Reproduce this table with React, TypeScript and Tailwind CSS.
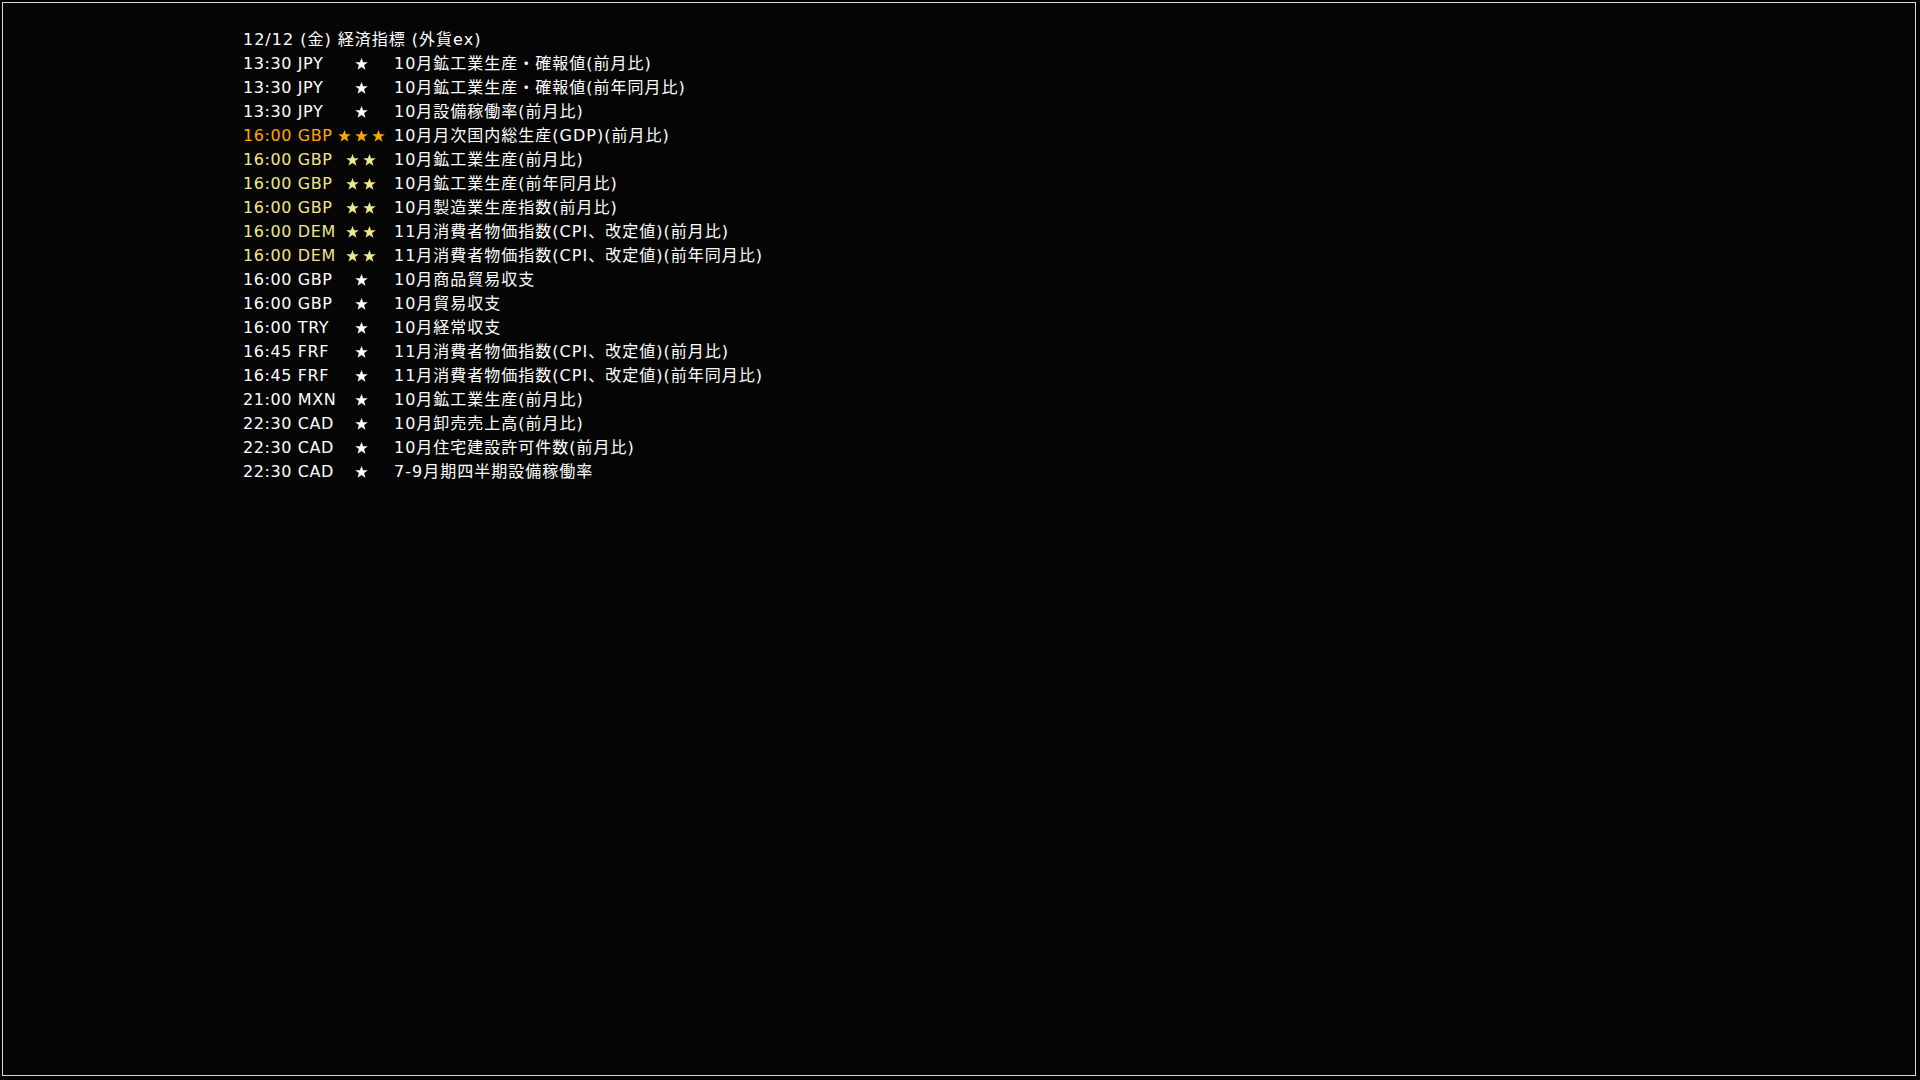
import React from "react";

type Row = { t: string; c: string; s: number; d: string };

const rows: Row[] = [
  { t: "13:30", c: "JPY", s: 1, d: "10月鉱工業生産・確報値(前月比)" },
  { t: "13:30", c: "JPY", s: 1, d: "10月鉱工業生産・確報値(前年同月比)" },
  { t: "13:30", c: "JPY", s: 1, d: "10月設備稼働率(前月比)" },
  { t: "16:00", c: "GBP", s: 3, d: "10月月次国内総生産(GDP)(前月比)" },
  { t: "16:00", c: "GBP", s: 2, d: "10月鉱工業生産(前月比)" },
  { t: "16:00", c: "GBP", s: 2, d: "10月鉱工業生産(前年同月比)" },
  { t: "16:00", c: "GBP", s: 2, d: "10月製造業生産指数(前月比)" },
  { t: "16:00", c: "DEM", s: 2, d: "11月消費者物価指数(CPI、改定値)(前月比)" },
  { t: "16:00", c: "DEM", s: 2, d: "11月消費者物価指数(CPI、改定値)(前年同月比)" },
  { t: "16:00", c: "GBP", s: 1, d: "10月商品貿易収支" },
  { t: "16:00", c: "GBP", s: 1, d: "10月貿易収支" },
  { t: "16:00", c: "TRY", s: 1, d: "10月経常収支" },
  { t: "16:45", c: "FRF", s: 1, d: "11月消費者物価指数(CPI、改定値)(前月比)" },
  { t: "16:45", c: "FRF", s: 1, d: "11月消費者物価指数(CPI、改定値)(前年同月比)" },
  { t: "21:00", c: "MXN", s: 1, d: "10月鉱工業生産(前月比)" },
  { t: "22:30", c: "CAD", s: 1, d: "10月卸売売上高(前月比)" },
  { t: "22:30", c: "CAD", s: 1, d: "10月住宅建設許可件数(前月比)" },
  { t: "22:30", c: "CAD", s: 1, d: "7-9月期四半期設備稼働率" },
];

function Star({ color }: { color: string }) {
  return (
    <svg width="13" height="12" viewBox="0 0 13 12" className="block">
      <polygon
        points="6.5,0 8.1,4.2 12.8,4.3 9.1,7.1 10.4,11.8 6.5,9.1 2.6,11.8 3.9,7.1 0.2,4.3 4.9,4.2"
        fill={color}
      />
    </svg>
  );
}

export default function App() {
  return (
    <div className="w-[1920px] h-[1080px] bg-black p-[2px]">
      <div
        className="w-[1914px] h-[1074px] border border-[#d8d8d8] bg-[#050505] pl-[240px] pt-[25px] text-[16px] leading-[24px] tracking-[1px] text-white"
        style={{ fontFamily: '"DejaVu Sans", "Noto Sans CJK JP", sans-serif' }}
      >
        <div>12/12 (金) 経済指標 (外貨ex)</div>
        {rows.map((r, i) => {
          const color =
            r.s === 3 ? "#ffa500" : r.s === 2 ? "#f0e68c" : "#ffffff";
          return (
            <div key={i} className="flex items-center h-[24px]">
              <div
                className="w-[93px] whitespace-nowrap tracking-[0.6px]"
                style={{ color }}
              >
                {r.t} {r.c}
              </div>
              <div className="w-[50px] flex justify-center gap-[4px]">
                {Array.from({ length: r.s }).map((_, k) => (
                  <Star key={k} color={color} />
                ))}
              </div>
              <div className="pl-[8px] whitespace-nowrap">{r.d}</div>
            </div>
          );
        })}
      </div>
    </div>
  );
}
